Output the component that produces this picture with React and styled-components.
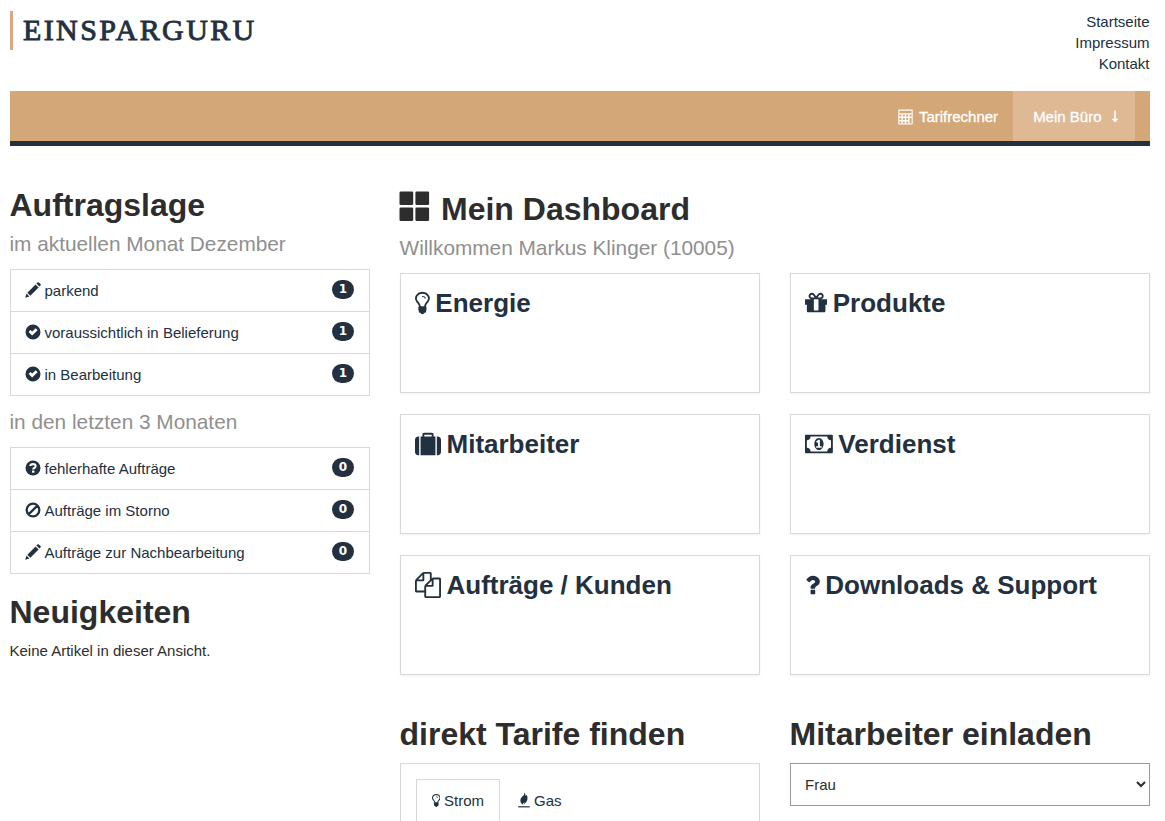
import React from 'react';
import styled, { createGlobalStyle } from 'styled-components';

const navy = '#22303f';
const sand = '#d4a778';
const line = '#d9d9d9';

const GlobalStyle = createGlobalStyle`
  * {
    box-sizing: border-box;
  }

  body {
    margin: 0;
    background: #fff;
    color: #2d2d2d;
    font-family: 'Liberation Sans', Arial, sans-serif;
    font-size: 15px;
    line-height: 21px;
    overflow: hidden;
  }

  a {
    color: ${navy};
    text-decoration: none;
  }
`;

const Page = styled.div`
  width: 1140px;
  height: 821px;
  margin-left: 10px;
`;

const Header = styled.header`
  display: flex;
  justify-content: space-between;
  height: 91px;
  padding-top: 11px;
`;

const Logo = styled.a`
  height: 39px;
  padding-left: 10px;
  border-left: 3px solid #dba683;
  font-family: 'Liberation Serif', serif;
  font-size: 30px;
  line-height: 38px;
  letter-spacing: 2.4px;
  -webkit-text-stroke: 0.9px ${navy};
`;

const MetaNav = styled.nav`
  display: flex;
  flex-direction: column;
  align-items: flex-end;
  padding-right: 0.5px;
`;

const NavBar = styled.nav`
  display: flex;
  justify-content: flex-end;
  height: 55px;
  padding-right: 15px;
  background: ${sand};
  border-bottom: 5px solid ${navy};
`;

const NavItem = styled.a`
  display: flex;
  align-items: center;
  gap: ${(props) => (props.$active ? '9px' : '6px')};
  padding: ${(props) => (props.$active ? '1px 16.5px 0 20px' : '1px 15px 0')};
  background: ${(props) => (props.$active ? '#deb994' : 'transparent')};
  color: #fff;
  -webkit-text-stroke: 0.3px #fff;
`;

const Columns = styled.div`
  display: grid;
  grid-template-columns: 360px 750px;
  column-gap: 30px;
`;

const Sidebar = styled.aside`
  padding-top: 39px;
`;

const Main = styled.main`
  padding-top: 43px;
`;

const Title = styled.h1`
  display: flex;
  align-items: flex-start;
  gap: 11px;
  height: 40px;
  margin: 0 0 0 -0.5px;
  font-size: 32px;
  line-height: 40px;
  white-space: nowrap;

  svg {
    margin: 2px 0 0 -0.5px;
  }
`;

const Subtitle = styled.p`
  margin: 0 0 0 -0.5px;
  color: #8f8f8f;
  font-size: 20.8px;
  line-height: 38px;
  padding-bottom: 6px;
`;

const StatusList = styled.ul`
  margin: 0 0 7px;
  padding: 0;
  list-style: none;
  border: 1px solid ${line};
`;

const StatusItem = styled.li`
  display: flex;
  align-items: center;
  height: ${(props) => (props.$first ? '41px' : '42px')};
  padding: 0 15px 0 14px;
  border-top: ${(props) => (props.$first ? '0' : `1px solid ${line}`)};
  color: ${navy};

  svg {
    margin: -1px 3.5px 0 0;
  }
`;

const StatusLabel = styled.span`
  padding-bottom: 1px;
`;

const Badge = styled.span`
  width: 22px;
  height: 19px;
  margin-left: auto;
  margin-top: -2px;
  border-radius: 10px;
  background: ${navy};
  color: #fff;
  font: bold 12px/19px 'DejaVu Sans', sans-serif;
  text-align: center;
`;

const NewsTitle = styled(Title)`
  margin-top: 18px;
`;

const NewsText = styled.p`
  margin: 8px 0 0 -0.5px;
`;

const TileGrid = styled.div`
  display: grid;
  grid-template-columns: 360px 360px;
  gap: 21px 30px;
`;

const Tile = styled.a`
  height: 120px;
  padding: 14px;
  border: 1px solid ${line};
  box-shadow: 0 1px 2px rgba(0, 0, 0, 0.06);
`;

const TileTitle = styled.h2`
  display: flex;
  align-items: center;
  gap: 5.5px;
  height: 30px;
  margin: 0;
  font-size: 26px;
  line-height: 30px;
  white-space: nowrap;
`;

const BottomGrid = styled.div`
  display: grid;
  grid-template-columns: 360px 360px;
  column-gap: 30px;
  margin-top: 39px;
`;

const SectionTitle = styled(Title)`
  height: 49px;
`;

const TariffBox = styled.div`
  height: 120px;
  padding: 15px;
  border: 1px solid ${line};
`;

const Tabs = styled.div`
  display: flex;
`;

const Tab = styled.button`
  display: flex;
  align-items: center;
  gap: 4px;
  height: 60px;
  padding: 0 14.5px 18px;
  border: 1px solid ${(props) => (props.$active ? line : 'transparent')};
  background: none;
  color: ${navy};
  font: inherit;
  margin-right: 3px;
`;

const Select = styled.select`
  width: 100%;
  height: 43px;
  padding: 0 10px;
  border: 1px solid #9a9a9a;
  border-radius: 0;
  background: #fff;
  color: #2d2d2d;
  font: inherit;
`;

const Glyph = styled.svg`
  display: block;
  flex: none;
  fill: currentColor;
`;

const bulbPath =
  'M1120 576q0 13-9.5 22.5t-22.5 9.5-22.5-9.5-9.5-22.5q0-46-54-71t-106-25q-13 0-22.5-9.5t-9.5-22.5 9.5-22.5 22.5-9.5q50 0 99.5 16t87 54 37.5 90zm160 0q0-72-34.5-134t-90-101.5-123-62-136.5-22.5-136.5 22.5-123 62-90 101.5-34.5 134q0 101 68 180 10 11 30.5 33t30.5 33q128 153 141 298h228q13-145 141-298 10-11 30.5-33t30.5-33q68-79 68-180zm128 0q0 155-103 268-45 49-74.5 87t-59.5 95.5-34 107.5q47 28 47 82 0 37-25 64 25 27 25 64 0 52-45 81 13 23 13 47 0 46-31.5 71t-77.5 25q-20 44-60 70t-87 26-87-26-60-70q-46 0-77.5-25t-31.5-71q0-24 13-47-45-29-45-81 0-37 25-64-25-27-25-64 0-54 47-82-4-50-34-107.5t-59.5-95.5-74.5-87q-103-113-103-268 0-99 44.5-184.5t117-142 164-89 186.5-32.5 186.5 32.5 164 89 117 142 44.5 184.5z';

// left edge, width and outline of each tile icon on the 1792 grid
const tileIcons = {
  bulb: [384, 1024, bulbPath],
  gift: [
    128,
    1536,
    'M1056 1356v-716h-320v716q0 25 18 38.5t46 13.5h192q28 0 46-13.5t18-38.5zm-456-844h195l-126-161q-26-31-69-31-40 0-68 28t-28 68 28 68 68 28zm688-96q0-40-28-68t-68-28q-43 0-69 31l-125 161h194q40 0 68-28t28-68zm376 256v320q0 14-9 23t-23 9h-96v416q0 40-28 68t-68 28h-1088q-40 0-68-28t-28-68v-416h-96q-14 0-23-9t-9-23v-320q0-14 9-23t23-9h440q-93 0-158.5-65.5t-65.5-158.5 65.5-158.5 158.5-65.5q107 0 168 77l128 165 128-165q61-77 168-77 93 0 158.5 65.5t65.5 158.5-65.5 158.5-158.5 65.5h440q14 0 23 9t9 23z',
  ],
  suitcase: [
    0,
    1792,
    'M640 384h512v-128h-512v128zm-352 0v1280h-64q-92 0-158-66t-66-158v-832q0-92 66-158t158-66h64zm1120 0v1280h-1024v-1280h128v-160q0-40 28-68t68-28h576q40 0 68 28t28 68v160h128zm384 224v832q0 92-66 158t-158 66h-64v-1280h64q92 0 158 66t66 158z',
  ],
  money: [
    -64,
    1920,
    'M704 1152h384v-96h-128v-448h-114l-148 137 77 80q42-37 55-57h2v288h-128v96zm512-256q0 70-21 142t-59.5 134-101.5 101-138 39-138-39-101.5-101-59.5-134-21-142 21-142 59.5-134 101.5-101 138-39 138 39 101.5 101 59.5 134 21 142zm512 256v-512q-106 0-181-75t-75-181h-1152q0 106-75 181t-181 75v512q106 0 181 75t75 181h1152q0-106 75-181t181-75zm128-832v1152q0 26-19 45t-45 19h-1792q-26 0-45-19t-19-45v-1152q0-26 19-45t45-19h1792q26 0 45 19t19 45z',
  ],
  files: [
    0,
    1792,
    'M1696 384q40 0 68 28t28 68v1216q0 40-28 68t-68 28h-960q-40 0-68-28t-28-68v-288h-544q-40 0-68-28t-28-68v-672q0-40 20-88t48-76l408-408q28-28 76-48t88-20h416q40 0 68 28t28 68v328q68-40 128-40h416zm-544 213l-299 299h299v-299zm-640-384l-299 299h299v-299zm196 647l316-316v-416h-384v416q0 40-28 68t-68 28h-416v640h512v-256q0-40 20-88t48-76zm956 804v-1152h-384v416q0 40-28 68t-68 28h-416v640h896z',
  ],
  question: [
    384,
    1024,
    'M1088 1256v240q0 16-12 28t-28 12h-240q-16 0-28-12t-12-28v-240q0-16 12-28t28-12h240q16 0 28 12t12 28zm316-600q0 54-15.5 101t-35 76.5-55 59.5-57.5 43.5-61 35.5q-41 23-68.5 65t-27.5 67q0 17-12 32.5t-28 15.5h-240q-15 0-25.5-18.5t-10.5-37.5v-45q0-83 65-156.5t143-108.5q59-27 84-56t25-76q0-42-46.5-74t-107.5-32q-65 0-108 29-35 25-107 115-13 16-31 16-12 0-25-8l-164-125q-13-10-15.5-25t5.5-28q160-266 464-266 80 0 161 31t146 83 106 127.5 41 158.5z',
  ],
};

function TileIcon({ name, size = 26 }) {
  const [x, width, path] = tileIcons[name];
  return (
    <Glyph width={(width / 1792) * size} height={size} viewBox={`${x} 0 ${width} 1792`}>
      <path d={path} />
    </Glyph>
  );
}

const statusIcons = {
  pencil: (
    <path d="M0.2 15.8 1.5 11.6 4.4 14.5zM2.3 10.7 10.6 2.4 13.6 5.4 5.3 13.7zM11.4 1.6 12.5 0.5Q13.2-0.1 13.9 0.5L15.5 2.1Q16.1 2.8 15.5 3.5L14.4 4.6z" />
  ),
  check: (
    <path
      fillRule="evenodd"
      d="M8 .5a7.5 7.5 0 1 0 0 15A7.5 7.5 0 0 0 8 .5zM3.6 8 5.4 6.1 7.2 7.6 10.7 4.3 12.6 6.2 7.2 11.5z"
    />
  ),
  question: (
    <>
      <circle cx="8" cy="8" r="7.5" />
      <path d="M5.3 6.1Q5.3 4.1 8 4.1T10.6 6.2Q10.6 7.4 9.3 8 8.2 8.5 8.2 9.6" fill="none" stroke="#fff" strokeWidth="2.1" />
      <path d="M7 10.6h2.4v2.1H7z" fill="#fff" />
    </>
  ),
  ban: (
    <path d="M8 1.7a6.3 6.3 0 1 0 0 12.6 6.3 6.3 0 0 0 0-12.6zM3.6 12.4 12.4 3.6" fill="none" stroke="currentColor" strokeWidth="2.3" />
  ),
};

function StatusIcon({ name }) {
  return (
    <Glyph width="16" height="16" viewBox="0 0 16 16">
      {statusIcons[name]}
    </Glyph>
  );
}

function CalculatorIcon() {
  return (
    <Glyph width="15" height="16" viewBox="0 0 15 16">
      <path
        fillRule="evenodd"
        d="M1 0.5h13q.7 0 .7.7v13.6q0 .7-.7.7H1q-.7 0-.7-.7V1.2Q.3.5 1 .5zM1.4 1.7v2.6h12.2V1.7zM1.4 5.6v2h2v-2zM4.8 5.6v2h2v-2zM8.2 5.6v2h2v-2zM11.6 5.6v2h2v-2zM1.4 9v2h2V9zM4.8 9v2h2V9zM8.2 9v2h2V9zM11.6 9v5.4h2V9zM1.4 12.4v2h2v-2zM4.8 12.4v2h2v-2zM8.2 12.4v2h2v-2z"
      />
    </Glyph>
  );
}

function ArrowDownIcon() {
  return (
    <Glyph width="8" height="13" viewBox="0 0 8 13">
      <path d="M3.2 0.5h1.6v8.2h2.6L4 12.5.6 8.7h2.6z" />
    </Glyph>
  );
}

function BlocksIcon() {
  return (
    <Glyph width="31" height="31" viewBox="0 0 31 31">
      <rect x="0.5" y="0.5" width="13.7" height="13.5" rx="1.3" />
      <rect x="16.4" y="0.5" width="13.7" height="13.5" rx="1.3" />
      <rect x="0.5" y="16.5" width="13.7" height="13.5" rx="1.3" />
      <rect x="16.4" y="16.5" width="13.7" height="13.5" rx="1.3" />
    </Glyph>
  );
}

function FlameIcon() {
  return (
    <Glyph width="12" height="16" viewBox="0 0 12 16">
      <path d="M6.6.4Q7.8 2.2 7.3 3.8 8.2 3.7 8.6 2.8 10 5.2 9.4 7.8 8.6 10.6 5.6 12.8 5.8 11.2 6.8 10.2 5.2 10.6 4.6 12.6 2.2 10.8 2.3 8.2 2.4 6 4.6 4.2 6.6 2.6 6.6.4z" />
      <path d="M.2 14.2h11.5v1.2H.2z" />
    </Glyph>
  );
}

const currentMonth = [
  { icon: 'pencil', label: 'parkend', count: 1 },
  { icon: 'check', label: 'voraussichtlich in Belieferung', count: 1 },
  { icon: 'check', label: 'in Bearbeitung', count: 1 },
];

const lastMonths = [
  { icon: 'question', label: 'fehlerhafte Aufträge', count: 0 },
  { icon: 'ban', label: 'Aufträge im Storno', count: 0 },
  { icon: 'pencil', label: 'Aufträge zur Nachbearbeitung', count: 0 },
];

const tiles = [
  { icon: 'bulb', label: 'Energie' },
  { icon: 'gift', label: 'Produkte' },
  { icon: 'suitcase', label: 'Mitarbeiter' },
  { icon: 'money', label: 'Verdienst' },
  { icon: 'files', label: 'Aufträge / Kunden' },
  { icon: 'question', label: 'Downloads & Support' },
];

function Statuses({ items }) {
  return (
    <StatusList>
      {items.map((item, index) => (
        <StatusItem key={item.label} $first={index === 0}>
          <StatusIcon name={item.icon} />
          <StatusLabel>{item.label}</StatusLabel>
          <Badge>{item.count}</Badge>
        </StatusItem>
      ))}
    </StatusList>
  );
}

function App() {
  return (
    <>
      <GlobalStyle />
      <Page>
        <Header>
          <Logo href="#">EINSPARGURU</Logo>
          <MetaNav>
            <a href="#">Startseite</a>
            <a href="#">Impressum</a>
            <a href="#">Kontakt</a>
          </MetaNav>
        </Header>
        <NavBar>
          <NavItem href="#">
            <CalculatorIcon />
            Tarifrechner
          </NavItem>
          <NavItem href="#" $active>
            Mein Büro
            <ArrowDownIcon />
          </NavItem>
        </NavBar>

        <Columns>
          <Sidebar>
            <Title>Auftragslage</Title>
            <Subtitle>im aktuellen Monat Dezember</Subtitle>
            <Statuses items={currentMonth} />
            <Subtitle>in den letzten 3 Monaten</Subtitle>
            <Statuses items={lastMonths} />
            <NewsTitle>Neuigkeiten</NewsTitle>
            <NewsText>Keine Artikel in dieser Ansicht.</NewsText>
          </Sidebar>

          <Main>
            <Title>
              <BlocksIcon />
              Mein Dashboard
            </Title>
            <Subtitle>Willkommen Markus Klinger (10005)</Subtitle>
            <TileGrid>
              {tiles.map((tile) => (
                <Tile key={tile.label} href="#">
                  <TileTitle>
                    <TileIcon name={tile.icon} />
                    {tile.label}
                  </TileTitle>
                </Tile>
              ))}
            </TileGrid>

            <BottomGrid>
              <section>
                <SectionTitle>direkt Tarife finden</SectionTitle>
                <TariffBox>
                  <Tabs>
                    <Tab $active>
                      <TileIcon name="bulb" size={15} />
                      Strom
                    </Tab>
                    <Tab>
                      <FlameIcon />
                      Gas
                    </Tab>
                  </Tabs>
                </TariffBox>
              </section>
              <section>
                <SectionTitle>Mitarbeiter einladen</SectionTitle>
                <Select defaultValue="Frau">
                  <option>Frau</option>
                  <option>Herr</option>
                </Select>
              </section>
            </BottomGrid>
          </Main>
        </Columns>
      </Page>
    </>
  );
}

export default App;
